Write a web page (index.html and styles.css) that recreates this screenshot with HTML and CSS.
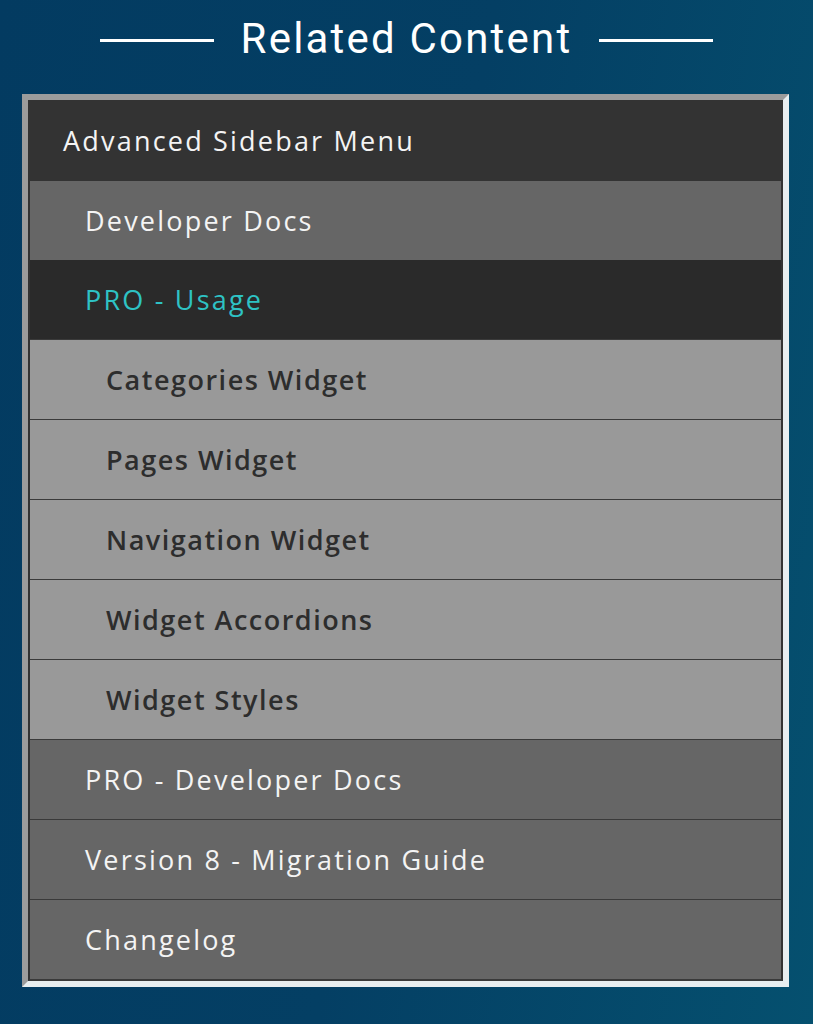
FILE: index.html
```html
<!DOCTYPE html>
<html lang="en">
<head>
    <meta charset="UTF-8">
    <meta name="viewport" content="width=device-width, initial-scale=1.0">
    <title>Related Content</title>
    <link rel="stylesheet" href="styles.css">
</head>
<body>

    <!-- Titulo con lineas -->
    <header class="related-title">
        <span class="title-line"></span>
        <h2>Related Content</h2>
        <span class="title-line"></span>
    </header>

    <!-- Menu lateral -->
    <div class="sidebar-box">
        <ul class="menu">
            <li class="menu-parent">
                <a href="#" class="item level-1">Advanced Sidebar Menu</a>
                <ul class="child-menu">
                    <li><a href="#" class="item level-2">Developer Docs</a></li>
                    <li class="current">
                        <a href="#" class="item level-2">PRO - Usage</a>
                        <ul class="grandchild-menu">
                            <li><a href="#" class="item level-3">Categories Widget</a></li>
                            <li><a href="#" class="item level-3">Pages Widget</a></li>
                            <li><a href="#" class="item level-3">Navigation Widget</a></li>
                            <li><a href="#" class="item level-3">Widget Accordions</a></li>
                            <li><a href="#" class="item level-3">Widget Styles</a></li>
                        </ul>
                    </li>
                    <li><a href="#" class="item level-2">PRO - Developer Docs</a></li>
                    <li><a href="#" class="item level-2">Version 8 - Migration Guide</a></li>
                    <li><a href="#" class="item level-2">Changelog</a></li>
                </ul>
            </li>
        </ul>
    </div>

</body>
</html>
```

FILE: styles.css
```css
/* Estilos básicos */
body {
    font-family: "Open Sans", Lato, sans-serif;
    background: linear-gradient(100deg, #033b61 0%, #043f64 50%, #05506f 100%);
    margin: 0;
    padding: 0;
    height: 1024px;
    overflow: hidden;
}
.related-title {
    display: flex;
    align-items: center;
    justify-content: center;
    gap: 27px;
    height: 80px;
    margin-bottom: 14px;
}
.related-title h2 {
    font-family: Roboto, sans-serif;
    font-weight: normal;
    font-size: 42px;
    letter-spacing: 2.2px;
    color: #fff;
    margin: 0;
    transform: translateY(-2px);
}
.title-line {
    display: block;
    width: 114px;
    height: 3px;
    background-color: #fff;
}
.sidebar-box {
    margin: 0 24px 0 22px;
    border: 6px solid #e8eef0;
    border-top-color: #9c9c9c;
    border-left-color: #9c9c9c;
}
.menu, .child-menu, .grandchild-menu {
    list-style: none;
    margin: 0;
    padding: 0;
}
.menu {
    border: 2px solid #333;
    border-top: 0;
    border-bottom-color: #3a3a3a;
}
.item {
    display: flex;
    align-items: center;
    height: 79px;
    font-size: 27px;
    letter-spacing: 2.2px;
    text-decoration: none;
    color: #f4f4f4;
    border-top: 1px solid #3a3a3a;
}
.level-1 {
    height: 81px;
    border-top: 0;
    padding-left: 33px;
    background-color: #333;
}
.level-2 {
    padding-left: 55px;
    background-color: #666;
}
.level-3 {
    padding-left: 76px;
    background-color: #999;
    color: #2d2d2d;
    font-weight: 600;
    letter-spacing: 1.5px;
}
.child-menu > li:first-child > .item {
    border-top: 0;
}
.current > .item {
    background-color: #2a2a2a;
    color: #2ec2c4;
    border-top: 0;
}
```
